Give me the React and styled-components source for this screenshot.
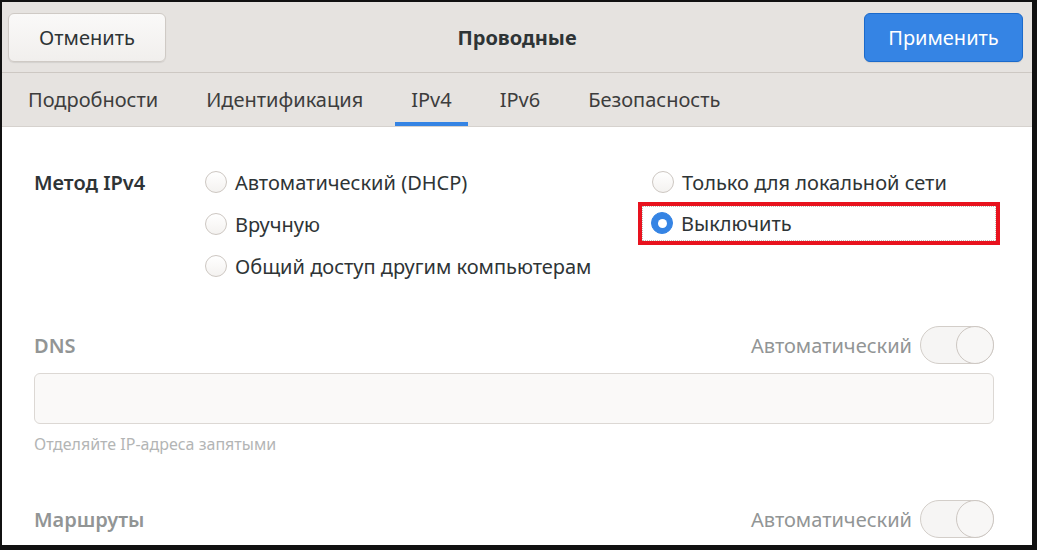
import React from "react";
import styled, { createGlobalStyle } from "styled-components";

const GlobalStyle = createGlobalStyle`
  html, body {
    margin: 0;
    padding: 0;
    background: #000;
  }
  body {
    font-family: "Noto Sans", "Open Sans", sans-serif;
  }
`;

const Frame = styled.div`
  width: 1037px;
  height: 550px;
  box-sizing: border-box;
  border-style: solid;
  border-color: #111;
  border-width: 2px 5px 5px 2px;
  background: #fff;
  display: flex;
  flex-direction: column;
  overflow: hidden;
`;

const HeaderBar = styled.div`
  height: 70px;
  flex: none;
  display: flex;
  align-items: center;
  justify-content: space-between;
  padding: 0 9px 0 6px;
  background: #e6e3e0;
  border-bottom: 1px solid #cdc8c3;
  position: relative;
`;

const Button = styled.button`
  height: 49px;
  padding: 0;
  border-radius: 6px;
  font-family: inherit;
  font-size: 20px;
  border: 1px solid ${(p) => (p.primary ? "#1b6acb" : "#cfcac5")};
  background: ${(p) => (p.primary ? "#3584e4" : "linear-gradient(#faf9f8, #f1efed)")};
  color: ${(p) => (p.primary ? "#fff" : "#2e3436")};
  box-shadow: 0 1px 1px rgba(0, 0, 0, 0.08);
  width: ${(p) => (p.primary ? "159px" : "158px")};
`;

const Title = styled.div`
  position: absolute;
  left: 0;
  right: 0;
  text-align: center;
  font-weight: 700;
  font-size: 20px;
  color: #2e3436;
  pointer-events: none;
`;

const TabBar = styled.div`
  height: 53px;
  flex: none;
  display: flex;
  align-items: stretch;
  padding-left: 10px;
  background: #e6e3e0;
  border-bottom: 1px solid #d6d2ce;
`;

const Tab = styled.div`
  display: flex;
  align-items: center;
  padding: 4px 16px 0;
  margin-right: 16px;
  font-size: 20px;
  color: #3d3d3d;
  border-bottom: 4px solid ${(p) => (p.active ? "#3584e4" : "transparent")};
  box-sizing: border-box;
`;

const Content = styled.div`
  flex: 1;
  padding: 34px 38px 0 32px;
  display: flex;
  flex-direction: column;
`;

const MethodGrid = styled.div`
  display: grid;
  grid-template-columns: 171px 447px 1fr;
  grid-auto-rows: 42px;
  align-items: center;
`;

const FieldLabel = styled.div`
  font-size: 20px;
  font-weight: 600;
  color: ${(p) => (p.dim ? "#929595" : "#2e3436")};
`;

const RadioRow = styled.div`
  display: flex;
  align-items: center;
  gap: 8px;
  font-size: 20px;
  color: #2e3436;
  height: 40px;
  box-sizing: border-box;
`;

const Highlight = styled.div`
  margin-left: -14px;
  margin-right: -6px;
  margin-top: -2px;
  border: 4px solid #e8121e;
  padding: 0;
  height: 43px;
  box-sizing: border-box;
  display: flex;
`;

const FocusRing = styled.div`
  flex: 1;
  border: 1px dotted #bfbcb8;
  display: flex;
  align-items: center;
  gap: 8px;
  padding-left: 8px;
  font-size: 20px;
  color: #2e3436;
`;

const Radio = styled.span`
  width: 22px;
  height: 22px;
  border-radius: 50%;
  box-sizing: border-box;
  flex: none;
  position: relative;
  border: 1px solid ${(p) => (p.checked ? "#3584e4" : "#cdc7c2")};
  background: ${(p) => (p.checked ? "#3584e4" : "linear-gradient(#fff, #f4f2f0)")};
  &::after {
    content: "";
    display: ${(p) => (p.checked ? "block" : "none")};
    position: absolute;
    left: 50%;
    top: 50%;
    width: 9px;
    height: 9px;
    margin: -4.5px 0 0 -4.5px;
    border-radius: 50%;
    background: #fff;
  }
`;

const SectionHead = styled.div`
  display: flex;
  align-items: center;
  justify-content: space-between;
  height: 40px;
  margin-top: ${(p) => p.top}px;
`;

const SwitchWrap = styled.div`
  display: flex;
  align-items: center;
  gap: 8px;
  font-size: 20px;
  color: #929595;
`;

const Switch = styled.span`
  width: 74px;
  height: 38px;
  border-radius: 19px;
  box-sizing: border-box;
  border: 1px solid #d3cec9;
  background: #f6f5f4;
  position: relative;
  &::after {
    content: "";
    position: absolute;
    right: -1px;
    top: -1px;
    width: 38px;
    height: 38px;
    border-radius: 50%;
    box-sizing: border-box;
    border: 1px solid #cdc7c2;
    background: #f8f7f6;
  }
`;

const TextBox = styled.div`
  margin-top: 8px;
  height: 49px;
  border: 1px solid #dcd8d4;
  border-radius: 6px;
  background: #faf9f8;
`;

const Hint = styled.div`
  margin-top: 9px;
  font-size: 16px;
  color: #b3b5b5;
`;

const tabs = ["Подробности", "Идентификация", "IPv4", "IPv6", "Безопасность"];

export default function App() {
  return (
    <>
      <GlobalStyle />
      <Frame>
        <HeaderBar>
          <Button>Отменить</Button>
          <Title>Проводные</Title>
          <Button primary>Применить</Button>
        </HeaderBar>
        <TabBar>
          {tabs.map((t) => (
            <Tab key={t} active={t === "IPv4"}>
              {t}
            </Tab>
          ))}
        </TabBar>
        <Content>
          <MethodGrid>
            <FieldLabel>Метод IPv4</FieldLabel>
            <RadioRow>
              <Radio />
              Автоматический (DHCP)
            </RadioRow>
            <RadioRow>
              <Radio />
              Только для локальной сети
            </RadioRow>
            <span />
            <RadioRow>
              <Radio />
              Вручную
            </RadioRow>
            <Highlight>
              <FocusRing>
                <Radio checked />
                Выключить
              </FocusRing>
            </Highlight>
            <span />
            <RadioRow>
              <Radio />
              Общий доступ другим компьютерам
            </RadioRow>
          </MethodGrid>
          <SectionHead top={38}>
            <FieldLabel dim>DNS</FieldLabel>
            <SwitchWrap>
              Автоматический
              <Switch />
            </SwitchWrap>
          </SectionHead>
          <TextBox />
          <Hint>Отделяйте IP-адреса запятыми</Hint>
          <SectionHead top={44}>
            <FieldLabel dim>Маршруты</FieldLabel>
            <SwitchWrap>
              Автоматический
              <Switch />
            </SwitchWrap>
          </SectionHead>
        </Content>
      </Frame>
    </>
  );
}
